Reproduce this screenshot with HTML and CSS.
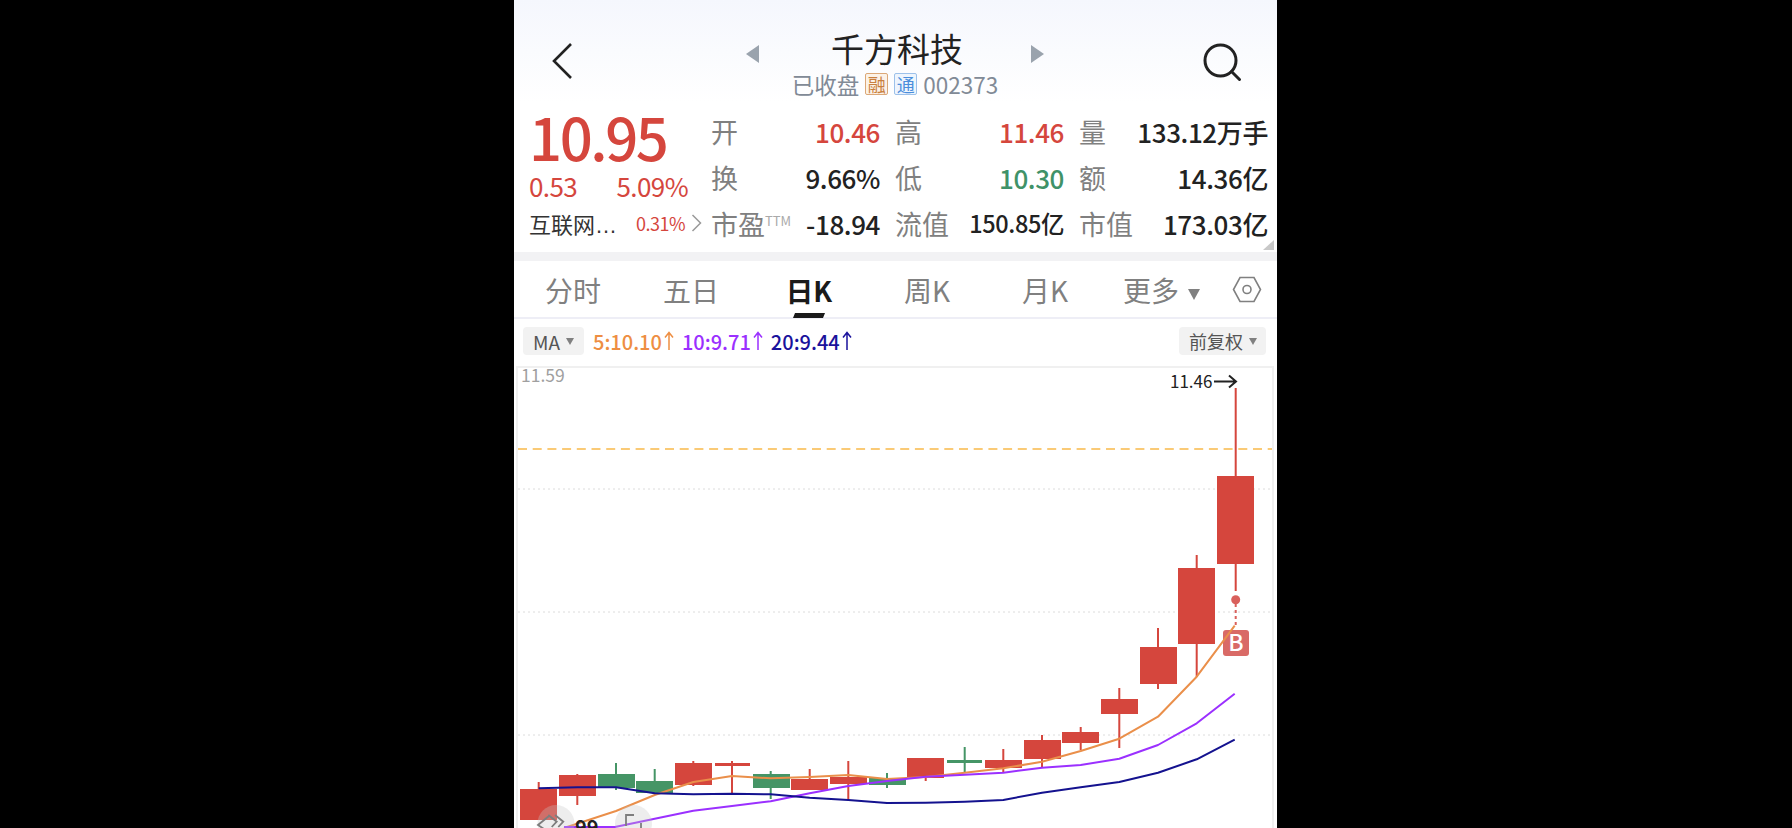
FILE: index.html
```html
<!DOCTYPE html>
<html lang="zh">
<head>
<meta charset="utf-8">
<title>千方科技</title>
<link rel="stylesheet" href="styles.css">
</head>
<body>
<main class="phone">
  <header class="header">
    <svg class="icon-back" width="24" height="38" viewBox="0 0 24 38"><path d="M21 2 4 19l17 17"/></svg>
    <div class="header-center">
      <div class="title-row">
        <span class="tri tri-left"></span>
        <h1 class="title">千方科技</h1>
        <span class="tri tri-right"></span>
      </div>
      <div class="sub-row">
        <span>已收盘</span>
        <span class="tag tag-orange">融</span>
        <span class="tag tag-blue">通</span>
        <span>002373</span>
      </div>
    </div>
    <svg class="icon-search" width="40" height="40" viewBox="0 0 40 40"><circle cx="18.5" cy="18.5" r="15.5"/><path d="m29.5 29.5 8 8"/></svg>
  </header>

  <section class="quote">
    <div class="quote-left">
      <div class="price">10.95</div>
      <div class="change"><span>0.53</span><span>5.09%</span></div>
      <div class="sector">
        <span class="sector-name">互联网<span class="dots">…</span></span>
        <span class="sector-pct">0.31%</span>
        <svg class="icon-more" width="11" height="20" viewBox="0 0 11 20"><path d="m1.5 2 8 8-8 8"/></svg>
      </div>
    </div>
    <div class="stats">
      <div class="stat"><span class="label">开</span><span class="value red">10.46</span></div>
      <div class="stat"><span class="label">高</span><span class="value red">11.46</span></div>
      <div class="stat"><span class="label">量</span><span class="value">133.12万手</span></div>
      <div class="stat"><span class="label">换</span><span class="value">9.66%</span></div>
      <div class="stat"><span class="label">低</span><span class="value green">10.30</span></div>
      <div class="stat"><span class="label">额</span><span class="value">14.36亿</span></div>
      <div class="stat"><span class="label">市盈<sup class="ttm">TTM</sup></span><span class="value">-18.94</span></div>
      <div class="stat"><span class="label">流值</span><span class="value value-small">150.85亿</span></div>
      <div class="stat"><span class="label">市值</span><span class="value">173.03亿</span></div>
    </div>
    <span class="corner"></span>
  </section>

  <nav class="tabs">
    <span class="tab">分时</span>
    <span class="tab">五日</span>
    <span class="tab tab-active">日K</span>
    <span class="tab">周K</span>
    <span class="tab">月K</span>
    <span class="tab tab-more">更多<i class="caret caret-lg"></i></span>
    <svg class="icon-hex" width="30" height="27" viewBox="0 0 30 27"><path d="M8 1.5h14l6.5 12-6.5 12H8l-6.500-12z"/><circle cx="15" cy="13.500" r="4"/></svg>
  </nav>

  <div class="ma-row">
    <span class="pill pill-ma">MA<i class="caret"></i></span>
    <span class="ma ma5">5:10.10<svg class="arrow" width="10" height="20" viewBox="0 0 10 20"><path d="M5 19V1.500M1 6.500l4-5 4 5"/></svg></span>
    <span class="ma ma10">10:9.71<svg class="arrow" width="10" height="20" viewBox="0 0 10 20"><path d="M5 19V1.500M1 6.500l4-5 4 5"/></svg></span>
    <span class="ma ma20">20:9.44<svg class="arrow" width="10" height="20" viewBox="0 0 10 20"><path d="M5 19V1.500M1 6.500l4-5 4 5"/></svg></span>
    <span class="pill pill-adj">前复权<i class="caret"></i></span>
  </div>

  <svg class="chart" width="763" height="462" viewBox="514 366 763 462">
    <path class="frame" d="M517 828V367H1273V828"/>
    <path class="grid" d="M518 489H1272M518 612H1272M518 735H1272"/>
    <path class="last" d="M518 449H1272"/>
    <text class="axis" x="521" y="382">11.59</text>
    <text class="peak" x="1170" y="388">11.46</text>
    <path class="peak-arrow" d="M1214 381.500h22M1229 375.500l7 6-7 6"/>

    <g class="down">
      <path class="wick" d="M538.700 782V790M577.300 774V805M693.300 761V786M732 761V793M809.700 769V790M848.300 761V799M925.700 758V781M1003.300 749V773M1042 735V768M1080.700 727V750M1119.300 688V748M1158 628V689M1196.700 555V677M1235.700 388V591"/>
      <rect x="520" y="789" width="37" height="31"/>
      <rect x="559" y="775" width="37" height="21"/>
      <rect x="675" y="763" width="37" height="22"/>
      <rect x="715" y="763" width="35" height="3"/>
      <rect x="791" y="779" width="37" height="11"/>
      <rect x="830" y="777" width="37" height="7"/>
      <rect x="907" y="758" width="37" height="20"/>
      <rect x="985" y="760" width="37" height="8"/>
      <rect x="1024" y="740" width="37" height="19"/>
      <rect x="1062" y="732" width="37" height="11"/>
      <rect x="1101" y="699" width="37" height="15"/>
      <rect x="1140" y="647" width="37" height="37"/>
      <rect x="1178" y="568" width="37" height="76"/>
      <rect x="1217" y="476" width="37" height="88"/>
    </g>
    <g class="rise">
      <path class="wick" d="M616 763V790M654.700 769V794M770.700 771V799M887 773V788M964.700 747V772"/>
      <rect x="598" y="774" width="37" height="14"/>
      <rect x="636" y="781" width="37" height="12"/>
      <rect x="753" y="774" width="37" height="14"/>
      <rect x="869" y="778" width="37" height="7"/>
      <rect x="947" y="760" width="35" height="3"/>
    </g>

    <path class="marker-line" d="M1235.700 604V628"/>
    <circle class="marker-dot" cx="1235.700" cy="599.700" r="4.500"/>
    <rect class="marker-badge" x="1223" y="630" width="26" height="26" rx="3"/>
    <text class="marker-text" x="1236" y="651">B</text>

    <path class="line line5" d="M564 828 616 811 654.700 795 693.300 782 732 776 770.700 778.300 809.700 777 848.300 775 887 779 925.700 777 964.700 772.700 1003.300 768.300 1042 761.700 1080.700 751 1119.300 738.700 1158 716.700 1196.700 676.700 1234.700 625.700"/>
    <path class="line line10" d="M564 827H615L652.300 819.300 693.300 810.700 732 806 770.700 801.300 809.700 793.300 848.300 786 887 781 925.700 776.700 964.700 774.700 1003.300 772.700 1042 767.700 1080.700 765 1119.300 758.700 1158 745 1196.700 723.300 1234.700 693.700"/>
    <path class="line line20" d="M538.700 788.300 577.300 787.300 616 787.300 654.700 793.300 693.300 794.300 732 793.700 770.700 794.300 809.700 797.700 848.300 800 887 803 925.700 802.700 964.700 801.700 1003.300 800 1042 792.700 1080.700 787.300 1119.300 782 1158 772.700 1196.700 759.300 1234.700 739.700"/>

    <circle class="fab" cx="556" cy="823.500" r="18.500"/>
    <circle class="fab" cx="633.500" cy="823.500" r="18.500"/>
    <path class="fab-icon" d="M549 816 538 825 544 829M548.300 815 556.700 821.700 551.700 827M555 815 563.300 821.700 558.300 827M626 826V815H634M641 823V829"/>
    <text class="fab-text" x="575" y="835">99</text>
  </svg>
</main>
</body>
</html>
```

FILE: styles.css
```css
* { box-sizing: border-box; }
html, body { margin: 0; height: 100%; }
body {
  background: #000;
  padding-left: 514px;
  overflow: hidden;
  font-family: "Noto Sans CJK SC", "Noto Sans", sans-serif;
  color: #222;
}
.phone {
  width: 763px;
  height: 828px;
  background: #fff;
  overflow: hidden;
  display: flex;
  flex-direction: column;
}

/* header */
.header {
  height: 103px;
  flex: none;
  display: flex;
  justify-content: space-between;
  padding: 0 35px 0 36px;
  background: linear-gradient(#f5f7fd, #fff);
}
.icon-back { margin: 42px 0 0 0; fill: none; stroke: #222; stroke-width: 2.600; }
.icon-search { margin: 42px 0 0 0; fill: none; stroke: #222; stroke-width: 3; stroke-linecap: round; }
.header-center {
  display: flex;
  flex-direction: column;
  align-items: center;
  padding-top: 27px;
  margin-left: 14px;
}
.title-row { display: flex; align-items: center; gap: 72px; height: 42px; }
.title { margin: 0; font-size: 33px; line-height: 42px; font-weight: 400; color: #222; }
.tri { width: 0; height: 0; border-top: 9px solid transparent; border-bottom: 9px solid transparent; margin-top: 11px; }
.tri-left { border-right: 13px solid #9aa3ad; }
.tri-right { border-left: 13px solid #9aa3ad; margin-left: -4px; }
.sub-row {
  display: flex;
  align-items: center;
  gap: 6px;
  height: 24px;
  margin-top: 3px;
  font-size: 22.500px;
  line-height: 24px;
  color: #818a96;
}
.tag {
  width: 23px;
  height: 22px;
  font-size: 18px;
  line-height: 20px;
  text-align: center;
  border-radius: 2px;
  border: 1px solid;
}
.tag-orange { color: #c9803f; border-color: #dba878; background: #fcf2e7; }
.tag-blue { color: #4a8edc; border-color: #9dc1ea; background: #eef5fd; }

/* quote */
.quote {
  position: relative;
  height: 149px;
  flex: none;
  display: flex;
  padding: 5px 7px 0 15px;
}
.quote-left { width: 184px; flex: none; margin-right: -2px; }
.price {
  margin-top: 3px;
  font-size: 58px;
  line-height: 50px;
  font-weight: 500;
  letter-spacing: -2.400px;
  color: #d5463d;
}
.change {
  display: flex;
  justify-content: space-between;
  width: 159px;
  font-size: 26px;
  line-height: 30px;
  color: #d5463d;
  margin-top: 10px;
  letter-spacing: -.600px;
}
.sector { display: flex; align-items: center; height: 36px; margin-top: 4px; }
.sector-name { font-size: 22px; color: #333; width: 107px; white-space: nowrap; }
.dots { font-family: "Liberation Sans", sans-serif; }
.sector-pct { font-size: 18px; color: #d5463d; width: 55px; letter-spacing: -.500px; }
.icon-more { fill: none; stroke: #999; stroke-width: 1.500; flex: none; }
.stats {
  display: grid;
  grid-template-columns: 169px 169px 189px;
  grid-auto-rows: 46px;
  column-gap: 15px;
}
.stat { display: flex; justify-content: space-between; align-items: center; }
.label { font-size: 27px; color: #808080; white-space: nowrap; }
.ttm { font-size: 13px; color: #aaa; vertical-align: 9px; line-height: 0; margin-left: 0; }
.value { font-size: 26px; font-weight: 500; letter-spacing: -.400px; color: #222; white-space: nowrap; }
.value-small { font-size: 23.500px; }
.red { color: #d5463d; }
.green { color: #3f9268; }
.corner {
  position: absolute;
  right: 3px;
  bottom: 2px;
  border-style: solid;
  border-width: 0 0 10px 11px;
  border-color: transparent transparent #c8c8c8 transparent;
}

/* tabs */
.tabs {
  height: 67px;
  flex: none;
  display: flex;
  align-items: center;
  padding-top: 2px;
  border-top: 9px solid #f2f2f4;
  border-bottom: 2px solid #eeeef6;
}
.tab {
  position: relative;
  width: 118px;
  flex: none;
  text-align: center;
  font-size: 28px;
  line-height: 38px;
  color: #808080;
}
.tab-active { color: #1a1a1a; font-weight: 700; font-size: 27.500px; }
.tab-active::after {
  content: "";
  position: absolute;
  left: 43px;
  bottom: -9px;
  width: 32px;
  height: 5px;
  background: #1a1a1a;
  clip-path: polygon(2px 0, 100% 0, 30px 100%, 0 100%);
}
.tab-more { width: 115px; padding-left: 6px; text-align: left; margin-left: 13px; white-space: nowrap; }
.caret {
  display: inline-block;
  margin-left: 9px;
  vertical-align: 2px;
  border-style: solid;
  border-width: 8px 5px 0;
  border-color: #808080 transparent transparent;
}
.caret-lg { border-width: 11px 6px 0; margin-left: 9px; vertical-align: 2px; }
.icon-hex { fill: none; stroke: #808080; stroke-width: 1.600; flex: none; margin-top: -2px; }

/* MA row */
.ma-row {
  height: 47px;
  flex: none;
  display: flex;
  align-items: center;
  padding: 0 11px 3px 9px;
  font-size: 20px;
  font-weight: 500;
}
.pill {
  height: 28px;
  display: flex;
  align-items: center;
  border-radius: 4px;
  background: #f2f2f2;
  color: #555;
  font-weight: 400;
}
.pill-ma { width: 61px; padding-left: 10px; margin-right: 9px; font-size: 19px; }
.pill-adj { width: 87px; padding-left: 10px; margin-left: auto; font-size: 18px; }
.pill .caret { margin-left: 6px; vertical-align: 0; border-width: 7px 4px 0; }
.ma { display: flex; align-items: center; margin-right: 8px; white-space: nowrap; }
.ma5 { color: #ee8e42; }
.ma10 { color: #9b30ff; margin-right: 8px; }
.ma20 { color: #1a129c; }
.arrow { fill: none; stroke: currentColor; stroke-width: 1.500; margin-left: 2px; }

/* chart */
.chart { flex: none; display: block; }
.frame { fill: none; stroke: #f0f0f0; stroke-width: 2; }
.grid { fill: none; stroke: #dcdcdc; stroke-width: 1; stroke-dasharray: 2 3; }
.last { fill: none; stroke: #f9b94a; stroke-width: 1.500; stroke-dasharray: 9 5.700; }
.axis { font-size: 17.500px; fill: #a0a0a0; }
.peak { font-size: 17px; fill: #222; }
.peak-arrow { fill: none; stroke: #222; stroke-width: 2; }
.down { fill: #d5463d; }
.rise { fill: #459566; }
.down .wick { fill: none; stroke: #d5463d; stroke-width: 2; }
.rise .wick { fill: none; stroke: #459566; stroke-width: 2; }
.marker-line { fill: none; stroke: #d9605c; stroke-width: 2; stroke-dasharray: 3 3; }
.marker-dot { fill: #d9605c; }
.marker-badge { fill: #d96a66; }
.marker-text { font-size: 23px; fill: #fff; text-anchor: middle; font-weight: 500; }
.line { fill: none; stroke-width: 2; stroke-linejoin: round; }
.line5 { stroke: #ea8f4a; }
.line10 { stroke: #9b30ff; }
.line20 { stroke: #14128f; }
.fab { fill: rgba(200, 200, 200, .32); }
.fab-icon { fill: none; stroke: #7d7d7d; stroke-width: 1.800; }
.fab-text { font-size: 20px; font-weight: 700; fill: #222; }
```
